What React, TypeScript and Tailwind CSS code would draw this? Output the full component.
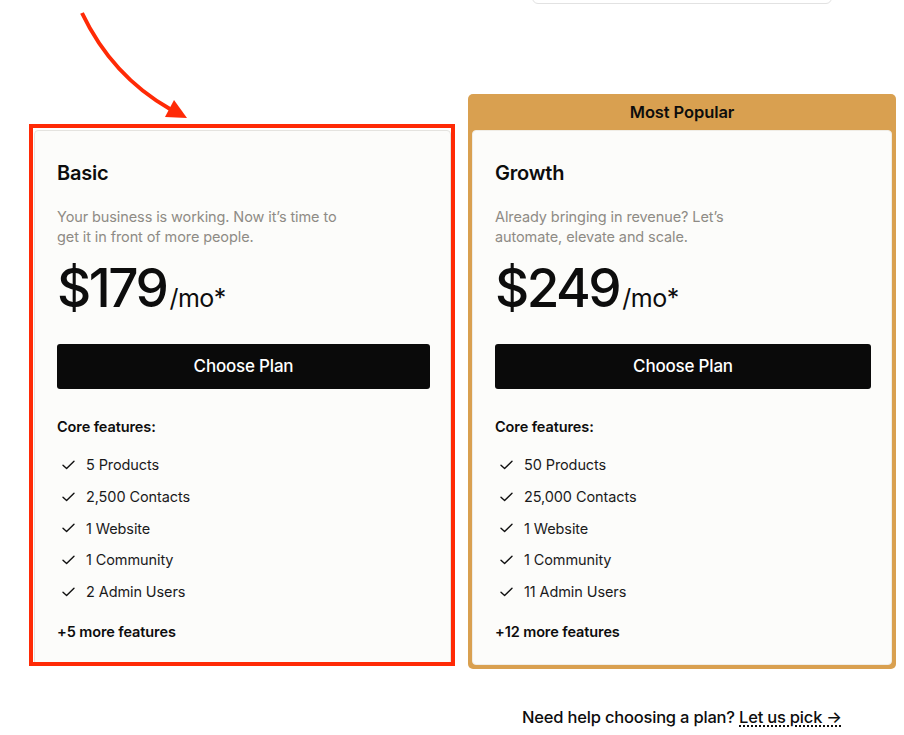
import React from 'react';

const FONT = { fontFamily: 'Inter, "Noto Sans", sans-serif' };

interface Plan {
    name: string;
    description: string[];
    price: string;
    features: string[];
    more: string;
}

const PLANS: Plan[] = [
    {
        name: 'Basic',
        description: ['Your business is working. Now it\u2019s time to', 'get it in front of more people.'],
        price: '$179',
        features: ['5 Products', '2,500 Contacts', '1 Website', '1 Community', '2 Admin Users'],
        more: '+5 more features',
    },
    {
        name: 'Growth',
        description: ['Already bringing in revenue? Let\u2019s', 'automate, elevate and scale.'],
        price: '$249',
        features: ['50 Products', '25,000 Contacts', '1 Website', '1 Community', '11 Admin Users'],
        more: '+12 more features',
    },
];

const CheckMark = () => (
    <svg width="13" height="10" viewBox="0 0 13 10" fill="none" className="shrink-0">
        <path d="M1 5.2 L4.6 8.6 L12 1.2" stroke="#111" strokeWidth="1.4" strokeLinecap="round" strokeLinejoin="round" />
    </svg>
);

const PlanCard = ({ plan, className }: { plan: Plan; className: string }) => (
    <div className={`bg-[#fcfcfa] border border-[#e4e3df] rounded-[4px] pl-[22px] pr-[20px] pt-[28px] pb-[22px] ${className}`}>
        <h3 className="text-[20px] leading-[28px] font-semibold text-[#0d0d0d] tracking-[-0.2px]">{plan.name}</h3>
        <p className="mt-[20px] text-[14.5px] leading-[20px] text-[#8e8b85] tracking-[-0.1px]">
            {plan.description[0]}
            <br />
            {plan.description[1]}
        </p>
        <div className="mt-[9px] flex items-baseline text-[#0d0d0d]">
            <span className="text-[53px] leading-[64px] font-medium tracking-[-2.5px]">{plan.price}</span>
            <span className="ml-[3px] text-[25px] leading-[30px] tracking-[-0.5px]">/mo*</span>
        </div>
        <button className="mt-[24px] w-full h-[45px] bg-[#0a0a0a] rounded-[3px] text-white text-[17px] font-medium tracking-[-0.2px]">
            Choose Plan
        </button>
        <div className="mt-[28px] text-[14.5px] leading-[20px] font-semibold text-[#0d0d0d] tracking-[-0.1px]">Core features:</div>
        <ul className="mt-[12px] flex flex-col">
            {plan.features.map(f => (
                <li key={f} className="h-[31.75px] flex items-center gap-[11px] pl-[5px] text-[14.5px] text-[#1a1a1a] tracking-[-0.1px]">
                    <CheckMark />
                    <span>{f}</span>
                </li>
            ))}
        </ul>
        <div className="mt-[14px] text-[14.5px] leading-[20px] font-semibold text-[#0d0d0d] tracking-[-0.1px]">{plan.more}</div>
    </div>
);

export default function App() {
    return (
        <div className="relative w-[904px] h-[735px] bg-white overflow-hidden" style={FONT}>
            <div className="flex items-start pl-[34px] gap-[17px]">
                <div className="w-[417px] mt-[130px]">
                    <PlanCard plan={PLANS[0]} className="" />
                </div>

                <div className="w-[428px] flex flex-col items-center">
                    <div className="w-[300px] h-[44px] -mt-[40px] border border-[#e2e2e2] rounded-[6px] bg-white" />
                    <div className="mt-[90px] w-full bg-[#d9a050] rounded-[5px] px-[4px] pb-[4px]">
                        <div className="h-[36px] flex items-center justify-center text-[16.5px] font-semibold text-[#0d0d0d] tracking-[-0.1px]">
                            Most Popular
                        </div>
                        <PlanCard plan={PLANS[1]} className="border-[#f0ede6]" />
                    </div>
                    <p className="mt-[36px] text-[16.5px] font-medium text-[#0d0d0d] tracking-[-0.2px]">
                        Need help choosing a plan?{' '}
                        <span className="underline decoration-dotted decoration-[1.5px] underline-offset-[3px]">Let us pick &rarr;</span>
                    </p>
                </div>
            </div>

            {/* annotation overlay */}
            <div className="absolute left-[29px] top-[124px] w-[426px] h-[542px] border-4 border-[#ff2a06] pointer-events-none" />
            <svg className="absolute left-0 top-0 pointer-events-none" width="220" height="130" viewBox="0 0 220 130">
                <path d="M82 13 Q112 76 170 109" stroke="#ff2a06" strokeWidth="4" fill="none" />
                <polygon points="165,117 187,118 174,100" fill="#ff2a06" />
            </svg>
        </div>
    );
}
